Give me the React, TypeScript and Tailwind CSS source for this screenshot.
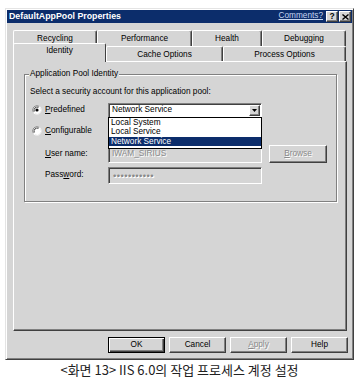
import React from 'react'

// Win2k-style 3D edges
const raised =
  'border border-t-white border-l-white border-r-[#404040] border-b-[#404040] shadow-[inset_-1px_-1px_0_#808080]'
const sunken =
  'border border-t-[#808080] border-l-[#808080] border-r-white border-b-white shadow-[inset_1px_1px_0_#404040]'
const disabledText = 'text-[#8a8a8a] [text-shadow:1px_1px_0_#ffffff]'

function Radio({ checked }: { checked?: boolean }) {
  return (
    <svg width="10" height="10" viewBox="0 0 10 10" className="shrink-0">
      <circle cx="5" cy="5" r="4.5" fill="#ffffff" />
      <path d="M1.3 7.2 A4.3 4.3 0 0 1 7.2 1.3" stroke="#808080" strokeWidth="1" fill="none" />
      <path d="M2.3 6.5 A3.2 3.2 0 0 1 6.5 2.3" stroke="#404040" strokeWidth="1" fill="none" />
      <path d="M8.7 2.8 A4.3 4.3 0 0 1 2.8 8.7" stroke="#e6e6e6" strokeWidth="1" fill="none" />
      {checked && <circle cx="5" cy="5" r="1.6" fill="#000000" />}
    </svg>
  )
}

function Tab({ label, w, selected }: { label: string; w: number; selected?: boolean }) {
  if (selected) {
    return (
      <div
        style={{ width: w }}
        className="relative z-10 h-[19px] -mb-[1px] bg-[#d5d5d5] border-t border-l border-r border-t-white border-l-white border-r-[#404040] rounded-t-[2px] flex items-start justify-center pt-[3px]"
      >
        {label}
      </div>
    )
  }
  return (
    <div
      style={{ width: w }}
      className="h-full border-t border-l border-r border-t-white border-l-white border-r-[#404040] shadow-[inset_-1px_0_0_#808080] rounded-t-[2px] flex items-start justify-center pt-[4px]"
    >
      {label}
    </div>
  )
}

function Button({ children, disabled, isDefault }: { children: React.ReactNode; disabled?: boolean; isDefault?: boolean }) {
  return (
    <div
      className={
        'w-[57px] h-[16px] flex items-center justify-center ' +
        (isDefault
          ? 'border border-black shadow-[inset_1px_1px_0_#ffffff,inset_-1px_-1px_0_#404040,inset_-2px_-2px_0_#808080]'
          : raised) +
        (disabled ? ' ' + disabledText : '')
      }
    >
      {children}
    </div>
  )
}

export default function App() {
  return (
    <div className="w-[359px] h-[380px] bg-white overflow-hidden font-['Liberation_Sans',Arial,sans-serif] text-[8.25px] text-black leading-none">
      {/* dialog */}
      <div className="ml-[5px] mt-[8px] w-[349px] h-[352px] bg-[#d5d5d5] border border-t-[#e4e4e4] border-l-[#e4e4e4] border-r-[#404040] border-b-[#404040] shadow-[inset_1px_1px_0_#ffffff,inset_-1px_-1px_0_#808080] p-[1px] flex flex-col">
        {/* title bar */}
        <div className="h-[13px] bg-[#0c2d6b] flex items-center pl-[2px] pr-[1px]">
          <span className="text-white font-bold text-[8.8px]">DefaultAppPool Properties</span>
          <span className="ml-auto mr-[3px] text-[#c4d4f0] underline text-[8.25px]">Comments?</span>
          <div className={'w-[12px] h-[11px] bg-[#d5d5d5] flex items-center justify-center font-bold text-[8.5px] ' + raised}>?</div>
          <div className={'ml-[1px] w-[12px] h-[11px] bg-[#d5d5d5] flex items-center justify-center ' + raised}>
            <svg width="7" height="6" viewBox="0 0 7 6">
              <path d="M0.5 0.5 L6.5 5.5 M6.5 0.5 L0.5 5.5" stroke="#000" strokeWidth="1.4" />
            </svg>
          </div>
        </div>

        <div className="pt-[7px] pl-[6px] flex flex-col">
          {/* tab rows */}
          <div className="flex h-[16px] w-[333px]">
            <Tab label="Recycling" w={84} />
            <Tab label="Performance" w={95} />
            <Tab label="Health" w={70} />
            <Tab label="Debugging" w={84} />
          </div>
          <div className="flex items-end h-[15px] w-[333px]">
            <Tab label="Identity" w={93} selected />
            <Tab label="Cache Options" w={117} />
            <Tab label="Process Options" w={123} />
          </div>

          {/* page */}
          <div className={'w-[334px] h-[270px] pl-[10px] pt-[12px] ' + raised}>
            <div className="relative w-[313px] h-[128px] border border-[#808080] shadow-[inset_1px_1px_0_#ffffff,1px_1px_0_#ffffff] pl-[5px] pt-[12px] flex flex-col">
              <span className="absolute -top-[5px] left-[4px] px-[1px] bg-[#d5d5d5]">Application Pool Identity</span>

              <div className="h-[10px] flex items-center">Select a security account for this application pool:</div>

              {/* predefined */}
              <div className="mt-[6px] h-[14px] flex items-center">
                <div className="w-[78px] flex items-center gap-[3px] pl-[2px]">
                  <Radio checked />
                  <span>
                    <span className="underline">P</span>redefined
                  </span>
                </div>
                <div className="relative">
                  <div className={'w-[154px] h-[15px] bg-white flex items-center pl-[3px] ' + sunken}>
                    <span>Network Service</span>
                    <div className={'ml-auto mr-[1px] w-[11px] h-[11px] bg-[#d5d5d5] flex items-center justify-center ' + raised}>
                      <svg width="5" height="3" viewBox="0 0 5 3">
                        <path d="M0 0 H5 L2.5 3 Z" fill="#000" />
                      </svg>
                    </div>
                  </div>
                  <div className="absolute z-20 left-0 top-[14px] w-[154px] h-[32px] bg-white border border-black flex flex-col py-[1px]">
                    <div className="h-[10px] flex items-center pl-[2px]">Local System</div>
                    <div className="h-[10px] flex items-center pl-[2px]">Local Service</div>
                    <div className="h-[10px] flex items-center pl-[2px] bg-[#0c2d6b] text-white">Network Service</div>
                  </div>
                </div>
              </div>

              {/* configurable */}
              <div className="mt-[9px] h-[10px] flex items-center gap-[3px] pl-[2px]">
                <Radio />
                <span>
                  <span className="underline">C</span>onfigurable
                </span>
              </div>

              {/* user name */}
              <div className="mt-[9px] h-[18px] flex items-center">
                <div className="w-[78px] pl-[15px]">
                  <span className="underline">U</span>ser name:
                </div>
                <div className={'w-[154px] h-[18px] bg-[#d5d5d5] flex items-center pl-[3px] ' + sunken}>
                  <span className={disabledText}>IWAM_SIRIUS</span>
                </div>
                <div className={'ml-[7px] w-[58px] h-[18px] flex items-center justify-center ' + raised + ' ' + disabledText}>
                  <span>
                    <span className="underline">B</span>rowse
                  </span>
                </div>
              </div>

              {/* password */}
              <div className="mt-[4px] h-[17px] flex items-center">
                <div className="w-[78px] pl-[15px]">
                  Pass<span className="underline">w</span>ord:
                </div>
                <div className={'w-[154px] h-[17px] bg-[#d5d5d5] flex items-center pl-[4px] ' + sunken}>
                  <span className={'text-[9.5px] tracking-[0.4px] ' + disabledText}>•••••••••••</span>
                </div>
              </div>
            </div>
          </div>

          {/* buttons */}
          <div className="mt-[6px] ml-[95px] flex gap-[4px]">
            <Button isDefault>OK</Button>
            <Button>Cancel</Button>
            <Button disabled>
              <span>
                <span className="underline">A</span>pply
              </span>
            </Button>
            <Button>Help</Button>
          </div>
        </div>
      </div>

      {/* caption */}
      <div className="h-[18px] flex items-center justify-center font-['Noto_Sans_CJK_KR','Noto_Sans',sans-serif] text-[13px] text-[#222222]">
        &lt;화면 13&gt; IIS 6.0의 작업 프로세스 계정 설정
      </div>
    </div>
  )
}
